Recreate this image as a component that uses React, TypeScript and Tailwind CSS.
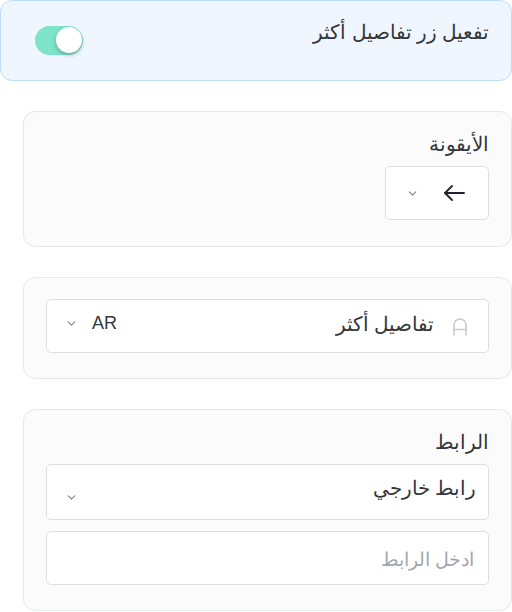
import { ChevronDown } from "lucide-react";

function Toggle({ on }: { on: boolean }) {
  return (
    <div
      className={`relative w-[48px] h-[29px] rounded-full ${on ? "bg-[#7de3c9]" : "bg-gray-300"}`}
    >
      <div className="absolute left-[21px] top-[1px] w-[26px] h-[26px] rounded-full bg-white shadow-[0_2px_4px_rgba(0,0,0,0.25)]" />
    </div>
  );
}

function LetterIcon() {
  return (
    <svg width="16" height="18" viewBox="0 0 16 18" fill="none" stroke="#c9cbd0" strokeWidth="1.6" strokeLinecap="round">
      <path d="M2 17V7a6 6 0 0 1 12 0v10" />
      <path d="M2 11.5h12" />
    </svg>
  );
}

function ArrowLeft() {
  return (
    <svg width="24" height="24" viewBox="0 0 24 24" fill="none" stroke="#1f2430" strokeWidth="1.8" strokeLinecap="round" strokeLinejoin="round">
      <path d="M22 12H3" />
      <path d="M10 5l-7 7 7 7" />
    </svg>
  );
}

export default function App() {
  return (
    <div
      dir="rtl"
      className="w-[512px] min-h-[612px] bg-white text-[#34373b] text-[20px] font-light"
      style={{ fontFamily: '"Noto Sans", "DejaVu Sans", sans-serif' }}
    >
      <div className="h-[81px] rounded-[12px] border border-[#bfdcfb] bg-[#eff6ff] flex justify-between items-start pr-[22px] pl-[34px] pt-[16px]">
        <span className="leading-[30px]">تفعيل زر تفاصيل أكثر</span>
        <div className="mt-[9px]">
          <Toggle on />
        </div>
      </div>

      <div className="pl-[23px] mt-[30px] flex flex-col gap-[30px]">
        <section className="rounded-[12px] border border-[#e4e7ee] bg-[#fbfbfc] px-[22px] pt-[17px] pb-[26px]">
          <div className="leading-[30px]">الأيقونة</div>
          <div className="mt-[7px] w-[104px] h-[54px] rounded-[5px] border border-[#dddfe3] bg-white flex items-center gap-[23px] pr-[22px]">
            <ArrowLeft />
            <ChevronDown size={13} strokeWidth={2} className="text-[#7b8494]" />
          </div>
        </section>

        <section className="rounded-[12px] border border-[#e4e7ee] bg-[#fbfbfc] px-[22px] pt-[21px] pb-[25px]">
          <div className="h-[54px] rounded-[5px] border border-[#dddfe3] bg-white flex items-start pt-[9px] pr-[20px] pl-[18px]">
            <span className="mt-[9px]">
              <LetterIcon />
            </span>
            <span className="mr-[18px] leading-[30px]">تفاصيل أكثر</span>
            <div className="mr-auto flex items-center gap-[14px] leading-[28px]">
              <span className="text-[18px] font-normal" style={{ fontFamily: '"Liberation Sans", sans-serif' }}>AR</span>
              <ChevronDown size={13} strokeWidth={2} className="text-[#7b8494]" />
            </div>
          </div>
        </section>

        <section className="rounded-[12px] border border-[#e4e7ee] bg-[#fbfbfc] px-[22px] pt-[17px] pb-[25px]">
          <div className="leading-[30px]">الرابط</div>
          <div className="mt-[7px] h-[56px] rounded-[5px] border border-[#dddfe3] bg-white flex items-start justify-between pr-[12px] pl-[18px] pt-[8px]">
            <span className="leading-[30px]">رابط خارجي</span>
            <ChevronDown size={13} strokeWidth={2} className="text-[#7b8494] mt-[18px]" />
          </div>
          <input
            className="mt-[11px] w-full h-[54px] rounded-[5px] border border-[#dddfe3] bg-white px-[14px] text-[18.5px] outline-none placeholder:text-[#a2a7b0]"
            placeholder="ادخل الرابط"
          />
        </section>
      </div>
    </div>
  );
}
